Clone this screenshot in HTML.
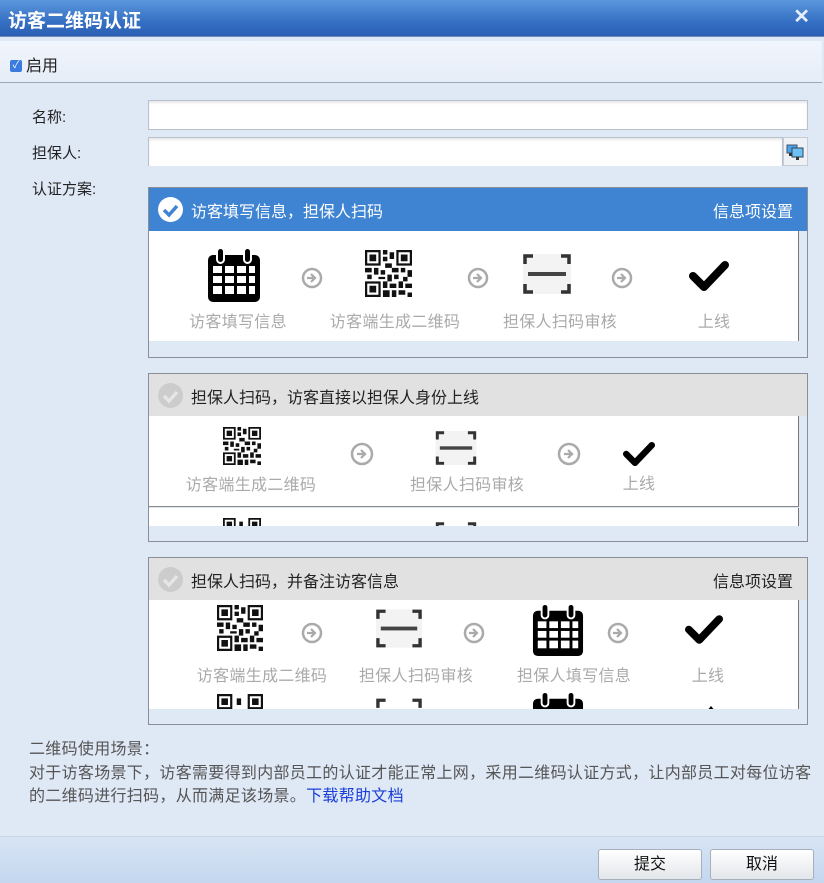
<!DOCTYPE html>
<html><head><meta charset="utf-8">
<style>
*{margin:0;padding:0;box-sizing:border-box}
body{width:824px;height:883px;overflow:hidden;background:#dfe8f5;font-family:"Liberation Sans","Noto Sans CJK SC",sans-serif;font-size:15px;color:#222;position:relative}
.a{position:absolute}
.title{left:0;top:0;width:824px;height:37px;background:linear-gradient(#5b97dc,#3570c4 60%,#2b5fb3);border-bottom:1px solid #6c8bb8}
.title span{position:absolute;left:8px;top:6px;color:#fff;font-size:19px;font-weight:bold}
.x{position:absolute;right:14px;top:4px;color:#e6eefa;font-size:20px;font-weight:bold}
.bar{left:0;top:41px;width:822px;height:42px;background:linear-gradient(#f1f5fc,#e6edf8);border-bottom:1px solid #9aa8bb}
.lbl{font-size:15px;color:#222}
.inp{background:#fff;border:1px solid #b9c1cc;box-shadow:inset 0 2px 2px #e8e8e8}
.panel{left:148px;width:660px;border:1px solid #8a8f96;background:#dfe8f5;overflow:hidden}
.hd{position:absolute;left:0;top:0;width:658px;height:43px}
.hd .t{position:absolute;left:42px;top:10px;font-size:16px}
.hd .r{position:absolute;right:14px;top:10px;font-size:16px}
.ci{position:absolute;left:9px;top:9px;width:25px;height:25px;border-radius:50%}
.ct{position:absolute;left:0;top:43px;width:650px;background:#fff;border-right:1px solid #777;overflow:hidden}
.cap{position:absolute;color:#aaa;font-size:16px;letter-spacing:0.3px;transform:translateX(-50%);white-space:nowrap}
.ic{position:absolute}
.btn{top:849px;height:31px;border:1px solid #a8b0bb;border-radius:3px;background:linear-gradient(#fff,#e3e6ea);font-size:16px;text-align:center;line-height:29px;color:#111}
</style></head><body>
<div class="a title"><span>访客二维码认证</span><div class="x">✕</div></div>
<div class="a bar">
 <div class="a" style="left:10px;top:19px;width:12px;height:12px;background:#3a7be0;border-radius:2px;color:#fff;font-size:10px;line-height:12px;text-align:center">✓</div>
 <div class="a lbl" style="left:26px;top:11px;font-size:16px">启用</div>
</div>
<div class="a lbl" style="left:32px;top:106px">名称:</div>
<div class="a inp" style="left:148px;top:100px;width:660px;height:30px"></div>
<div class="a lbl" style="left:32px;top:142px">担保人:</div>
<div class="a inp" style="left:148px;top:137px;width:635px;height:29px;border-bottom:none"></div>
<div class="a" style="left:783px;top:137px;width:25px;height:29px;background:#eef1f5;border:1px solid #c7ccd3">
 <svg width="23" height="27" viewBox="0 0 23 27"><rect x="3" y="7" width="10" height="8" fill="#4aa3e8" stroke="#456" stroke-width="1"/><rect x="8" y="10" width="11" height="9" fill="#6cc0f5" stroke="#345" stroke-width="1"/><rect x="12" y="19" width="3" height="3" fill="#333"/><rect x="5" y="15" width="3" height="3" fill="#333"/></svg>
</div>
<div class="a lbl" style="left:32px;top:178px">认证方案:</div>

<!-- Panel 1 -->
<div class="a panel" style="top:187px;height:171px">
 <div class="hd" style="background:#3f84d2;color:#fff">
  <div class="ci" style="background:#fff"><svg width="25" height="25"><path d="M6 13l5 5 8-9" stroke="#3f84d2" stroke-width="3.5" fill="none"/></svg></div>
  <div class="t" style="color:#fff">访客填写信息，担保人扫码</div>
  <div class="r" style="color:#fff">信息项设置</div>
 </div>
 <div class="ct" style="height:110px">
  <svg class="ic" style="left:58px;top:16px" width="54" height="56" viewBox="0 0 54 56"><rect x="1" y="8" width="52" height="47" rx="5" fill="#000"/><rect x="10" y="1" width="7" height="15" rx="3.5" fill="#000" stroke="#fff" stroke-width="2"/><rect x="37" y="1" width="7" height="15" rx="3.5" fill="#000" stroke="#fff" stroke-width="2"/><g fill="#fff"><rect x="6" y="19" width="9" height="7"/><rect x="18" y="19" width="9" height="7"/><rect x="30" y="19" width="9" height="7"/><rect x="42" y="19" width="6" height="7"/><rect x="6" y="29" width="9" height="7"/><rect x="18" y="29" width="9" height="7"/><rect x="30" y="29" width="9" height="7"/><rect x="42" y="29" width="6" height="7"/><rect x="6" y="39" width="9" height="8"/><rect x="18" y="39" width="9" height="8"/><rect x="30" y="39" width="9" height="8"/><rect x="42" y="39" width="6" height="8"/></g></svg>
  <svg class="ic" style="left:152px;top:36px" width="22" height="22"><circle cx="11" cy="11" r="9" fill="none" stroke="#aaa" stroke-width="2.5"/><path d="M6 11h8M10 7l4 4-4 4" stroke="#aaa" stroke-width="2.2" fill="none"/></svg>
  <svg class="ic" style="left:216px;top:19px" width="47" height="47" viewBox="0 0 21 21"><rect width="21" height="21" fill="#fff"/><g fill="#111"><path d="M0 0h7v7H0zM14 0h7v7h-7zM0 14h7v7H0z"/></g><g fill="#fff"><path d="M1 1h5v5H1zM15 1h5v5h-5zM1 15h5v5H1z"/></g><g fill="#111"><path d="M2 2h3v3H2zM16 2h3v3h-3zM2 16h3v3H2zM8 0h2v2H8zM11 1h2v3h-2zM8 3h2v2H8zM9 6h3v2H9zM0 8h3v2H0zM4 8h2v3H4zM7 9h2v2H7zM12 8h3v2h-3zM16 8h2v2h-2zM19 9h2v3h-2zM1 11h2v2H1zM6 12h3v1H6zM10 11h2v3h-2zM13 11h2v2h-2zM17 12h2v2h-2zM8 14h2v3H8zM11 15h3v2h-3zM15 14h2v3h-2zM18 15h3v2h-3zM8 18h3v3H8zM12 18h2v3h-2zM15 18h3v2h-3zM19 19h2v2h-2z"/></g></svg>
  <svg class="ic" style="left:318px;top:36px" width="22" height="22"><circle cx="11" cy="11" r="9" fill="none" stroke="#aaa" stroke-width="2.5"/><path d="M6 11h8M10 7l4 4-4 4" stroke="#aaa" stroke-width="2.2" fill="none"/></svg>
  <svg class="ic" style="left:374px;top:23px" width="48" height="40" viewBox="0 0 48 40"><rect width="48" height="40" fill="#f3f3f3"/><path d="M2 10V2h8M38 2h8v8M2 30v8h8M38 38h8v-8" stroke="#333" stroke-width="3.5" fill="none"/><rect x="5" y="18" width="38" height="4" fill="#444"/></svg>
  <svg class="ic" style="left:462px;top:36px" width="22" height="22"><circle cx="11" cy="11" r="9" fill="none" stroke="#aaa" stroke-width="2.5"/><path d="M6 11h8M10 7l4 4-4 4" stroke="#aaa" stroke-width="2.2" fill="none"/></svg>
  <svg class="ic" style="left:540px;top:29px" width="40" height="32" viewBox="0 0 40 32"><path d="M4 16l11 11L36 5" stroke="#000" stroke-width="8" fill="none" stroke-linecap="round" stroke-linejoin="round"/></svg>
  <div class="cap" style="left:89px;top:77px">访客填写信息</div>
  <div class="cap" style="left:246px;top:77px">访客端生成二维码</div>
  <div class="cap" style="left:411px;top:77px">担保人扫码审核</div>
  <div class="cap" style="left:565px;top:77px">上线</div>
 </div>
</div>

<!-- Panel 2 -->
<div class="a panel" style="top:373px;height:169px">
 <div class="hd" style="background:#e1e1e1;height:42px">
  <div class="ci" style="background:#ccc"><svg width="25" height="25"><path d="M6 13l5 5 8-9" stroke="#e6e6e6" stroke-width="3.5" fill="none"/></svg></div>
  <div class="t">担保人扫码，访客直接以担保人身份上线</div>
 </div>
 <div class="ct" style="top:42px;height:91px;border-bottom:1px solid #888">
  <svg class="ic" style="left:74px;top:11px" width="38" height="38" viewBox="0 0 21 21"><g fill="#111"><path d="M0 0h7v7H0zM14 0h7v7h-7zM0 14h7v7H0z"/></g><g fill="#fff"><path d="M1 1h5v5H1zM15 1h5v5h-5zM1 15h5v5H1z"/></g><g fill="#111"><path d="M2 2h3v3H2zM16 2h3v3h-3zM2 16h3v3H2zM8 0h2v2H8zM11 1h2v3h-2zM8 3h2v2H8zM9 6h3v2H9zM0 8h3v2H0zM4 8h2v3H4zM7 9h2v2H7zM12 8h3v2h-3zM16 8h2v2h-2zM19 9h2v3h-2zM1 11h2v2H1zM6 12h3v1H6zM10 11h2v3h-2zM13 11h2v2h-2zM17 12h2v2h-2zM8 14h2v3H8zM11 15h3v2h-3zM15 14h2v3h-2zM18 15h3v2h-3zM8 18h3v3H8zM12 18h2v3h-2zM15 18h3v2h-3zM19 19h2v2h-2z"/></g></svg>
  <svg class="ic" style="left:201px;top:26px" width="24" height="24"><circle cx="12" cy="12" r="10" fill="none" stroke="#aaa" stroke-width="2.5"/><path d="M7 12h9M11 8l4 4-4 4" stroke="#aaa" stroke-width="2.2" fill="none"/></svg>
  <svg class="ic" style="left:286px;top:15px" width="42" height="34" viewBox="0 0 48 40"><rect width="48" height="40" fill="#f3f3f3"/><path d="M2 10V2h8M38 2h8v8M2 30v8h8M38 38h8v-8" stroke="#333" stroke-width="3.5" fill="none"/><rect x="5" y="18" width="38" height="4" fill="#444"/></svg>
  <svg class="ic" style="left:408px;top:26px" width="24" height="24"><circle cx="12" cy="12" r="10" fill="none" stroke="#aaa" stroke-width="2.5"/><path d="M7 12h9M11 8l4 4-4 4" stroke="#aaa" stroke-width="2.2" fill="none"/></svg>
  <svg class="ic" style="left:474px;top:25px" width="32" height="26" viewBox="0 0 40 32"><path d="M4 16l11 11L36 5" stroke="#000" stroke-width="8" fill="none" stroke-linecap="round" stroke-linejoin="round"/></svg>
  <div class="cap" style="left:102px;top:55px">访客端生成二维码</div>
  <div class="cap" style="left:318px;top:55px">担保人扫码审核</div>
  <div class="cap" style="left:490px;top:54px">上线</div>
 </div>
 <div class="ct" style="top:134px;height:18px">
  <svg class="ic" style="left:74px;top:10px" width="38" height="38" viewBox="0 0 21 21"><g fill="#111"><path d="M0 0h7v7H0zM14 0h7v7h-7z"/></g><g fill="#fff"><path d="M1 1h5v5H1zM15 1h5v5h-5z"/></g><g fill="#111"><path d="M2 2h3v3H2zM16 2h3v3h-3zM9 2h2v3H9z"/></g></svg>
  <svg class="ic" style="left:286px;top:14px" width="42" height="34" viewBox="0 0 48 40"><path d="M2 10V2h8M38 2h8v8" stroke="#333" stroke-width="3.5" fill="none"/></svg>
 </div>
</div>

<!-- Panel 3 -->
<div class="a panel" style="top:557px;height:168px">
 <div class="hd" style="background:#e1e1e1;height:42px">
  <div class="ci" style="background:#ccc"><svg width="25" height="25"><path d="M6 13l5 5 8-9" stroke="#e6e6e6" stroke-width="3.5" fill="none"/></svg></div>
  <div class="t">担保人扫码，并备注访客信息</div>
  <div class="r">信息项设置</div>
 </div>
 <div class="ct" style="top:42px;height:109px">
  <svg class="ic" style="left:68px;top:5px" width="46" height="46" viewBox="0 0 21 21"><g fill="#111"><path d="M0 0h7v7H0zM14 0h7v7h-7zM0 14h7v7H0z"/></g><g fill="#fff"><path d="M1 1h5v5H1zM15 1h5v5h-5zM1 15h5v5H1z"/></g><g fill="#111"><path d="M2 2h3v3H2zM16 2h3v3h-3zM2 16h3v3H2zM8 0h2v2H8zM11 1h2v3h-2zM8 3h2v2H8zM9 6h3v2H9zM0 8h3v2H0zM4 8h2v3H4zM7 9h2v2H7zM12 8h3v2h-3zM16 8h2v2h-2zM19 9h2v3h-2zM1 11h2v2H1zM6 12h3v1H6zM10 11h2v3h-2zM13 11h2v2h-2zM17 12h2v2h-2zM8 14h2v3H8zM11 15h3v2h-3zM15 14h2v3h-2zM18 15h3v2h-3zM8 18h3v3H8zM12 18h2v3h-2zM15 18h3v2h-3zM19 19h2v2h-2z"/></g></svg>
  <svg class="ic" style="left:152px;top:22px" width="22" height="22"><circle cx="11" cy="11" r="9" fill="none" stroke="#aaa" stroke-width="2.5"/><path d="M6 11h8M10 7l4 4-4 4" stroke="#aaa" stroke-width="2.2" fill="none"/></svg>
  <svg class="ic" style="left:227px;top:9px" width="46" height="39" viewBox="0 0 48 40"><rect width="48" height="40" fill="#f3f3f3"/><path d="M2 10V2h8M38 2h8v8M2 30v8h8M38 38h8v-8" stroke="#333" stroke-width="3.5" fill="none"/><rect x="5" y="18" width="38" height="4" fill="#444"/></svg>
  <svg class="ic" style="left:314px;top:22px" width="22" height="22"><circle cx="11" cy="11" r="9" fill="none" stroke="#aaa" stroke-width="2.5"/><path d="M6 11h8M10 7l4 4-4 4" stroke="#aaa" stroke-width="2.2" fill="none"/></svg>
  <svg class="ic" style="left:383px;top:2px" width="52" height="56" viewBox="0 0 54 56"><rect x="1" y="8" width="52" height="47" rx="5" fill="#000"/><rect x="10" y="1" width="7" height="15" rx="3.5" fill="#000" stroke="#fff" stroke-width="2"/><rect x="37" y="1" width="7" height="15" rx="3.5" fill="#000" stroke="#fff" stroke-width="2"/><g fill="#fff"><rect x="6" y="19" width="9" height="7"/><rect x="18" y="19" width="9" height="7"/><rect x="30" y="19" width="9" height="7"/><rect x="42" y="19" width="6" height="7"/><rect x="6" y="29" width="9" height="7"/><rect x="18" y="29" width="9" height="7"/><rect x="30" y="29" width="9" height="7"/><rect x="42" y="29" width="6" height="7"/><rect x="6" y="39" width="9" height="8"/><rect x="18" y="39" width="9" height="8"/><rect x="30" y="39" width="9" height="8"/><rect x="42" y="39" width="6" height="8"/></g></svg>
  <svg class="ic" style="left:458px;top:22px" width="22" height="22"><circle cx="11" cy="11" r="9" fill="none" stroke="#aaa" stroke-width="2.5"/><path d="M6 11h8M10 7l4 4-4 4" stroke="#aaa" stroke-width="2.2" fill="none"/></svg>
  <svg class="ic" style="left:536px;top:14px" width="38" height="31" viewBox="0 0 40 32"><path d="M4 16l11 11L36 5" stroke="#000" stroke-width="8" fill="none" stroke-linecap="round" stroke-linejoin="round"/></svg>
  <div class="cap" style="left:113px;top:62px">访客端生成二维码</div>
  <div class="cap" style="left:267px;top:62px">担保人扫码审核</div>
  <div class="cap" style="left:425px;top:62px">担保人填写信息</div>
  <div class="cap" style="left:559px;top:62px">上线</div>
  <svg class="ic" style="left:68px;top:94px" width="46" height="46" viewBox="0 0 21 21"><g fill="#111"><path d="M0 0h7v7H0zM14 0h7v7h-7z"/></g><g fill="#fff"><path d="M1 1h5v5H1zM15 1h5v5h-5z"/></g><g fill="#111"><path d="M2 2h3v3H2zM16 2h3v3h-3zM9 2h2v3H9z"/></g></svg>
  <svg class="ic" style="left:227px;top:98px" width="46" height="39" viewBox="0 0 48 40"><path d="M2 10V2h8M38 2h8v8" stroke="#333" stroke-width="3.5" fill="none"/></svg>
  <svg class="ic" style="left:383px;top:90px" width="52" height="56" viewBox="0 0 54 56"><rect x="1" y="8" width="52" height="47" rx="5" fill="#000"/><rect x="10" y="1" width="7" height="15" rx="3.5" fill="#000" stroke="#fff" stroke-width="2"/><rect x="37" y="1" width="7" height="15" rx="3.5" fill="#000" stroke="#fff" stroke-width="2"/></svg>
  <svg class="ic" style="left:555px;top:104px" width="14" height="8"><path d="M2 8l5-6 5 6z" fill="#000"/></svg>
 </div>
</div>

<div class="a" style="left:29px;top:738px;color:#555;font-size:16px;letter-spacing:0.3px;line-height:23.5px;width:795px;white-space:nowrap">二维码使用场景：<br>对于访客场景下，访客需要得到内部员工的认证才能正常上网，采用二维码认证方式，让内部员工对每位访客<br>的二维码进行扫码，从而满足该场景。<span style="color:#1a3fd8">下载帮助文档</span></div>

<div class="a" style="left:0;top:836px;width:824px;height:47px;background:linear-gradient(#d7e4f4,#c4d7ef);border-top:1px solid #cbd6e4"></div>
<div class="a btn" style="left:598px;width:104px">提交</div>
<div class="a btn" style="left:710px;width:104px">取消</div>
</body></html>
